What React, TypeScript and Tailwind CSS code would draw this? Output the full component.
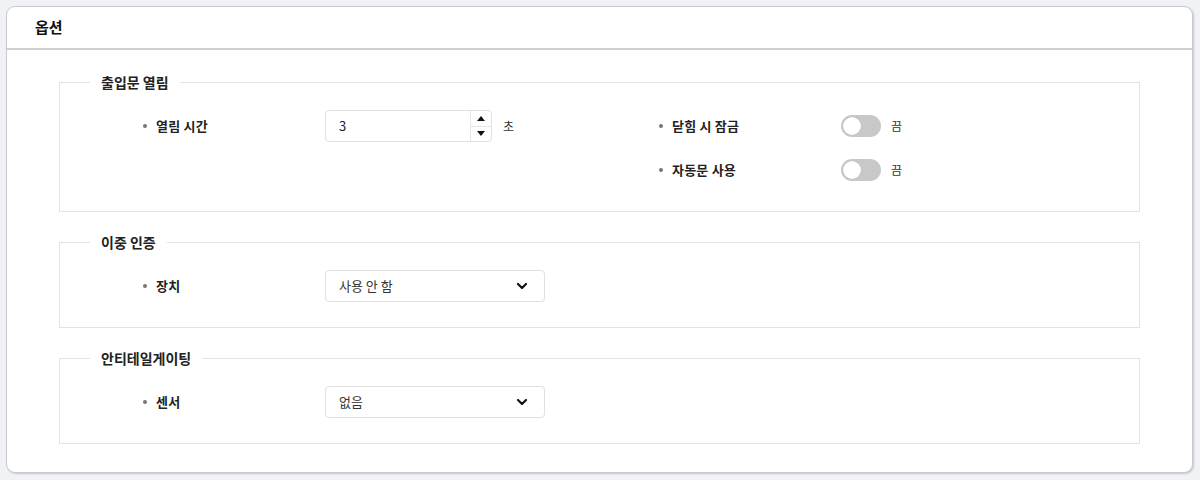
import { ChevronDown } from "lucide-react";

const font = { fontFamily: '"Noto Sans CJK KR", "Noto Sans", sans-serif' };

function Label({ text }: { text: string }) {
  return (
    <div className="flex items-center w-[182px] shrink-0">
      <span className="w-[4px] h-[4px] rounded-full bg-[#777] mr-[9px]" />
      <span className="text-[13px] font-bold text-[#222] tracking-[0.2px]">{text}</span>
    </div>
  );
}

function Toggle() {
  return (
    <div className="flex items-center gap-[10px]">
      <div className="w-[40px] h-[22px] rounded-full bg-[#c8c8c8] p-[2px] flex items-center">
        <div className="w-[18px] h-[18px] rounded-full bg-white shadow-[0_0_1px_rgba(0,0,0,0.2)]" />
      </div>
      <span className="text-[12px] text-[#333]">끔</span>
    </div>
  );
}

function Select({ value }: { value: string }) {
  return (
    <div className="w-[220px] h-[32px] border border-[#e0e0e0] rounded-[4px] bg-white flex items-center justify-between pl-[13px] pr-[14px]">
      <span className="text-[13px] text-[#333]">{value}</span>
      <ChevronDown size={16} strokeWidth={3.2} className="text-[#111]" />
    </div>
  );
}

function Group({ title, children }: { title: string; children: React.ReactNode }) {
  return (
    <fieldset className="border border-[#e2e2e2] px-0 pt-[18px] pb-[25px] m-0 min-w-0">
      <legend className="ml-[30px] px-[11px] text-[14px] font-bold text-[#222] leading-[20px]">{title}</legend>
      <div className="pl-[83px] pr-4">{children}</div>
    </fieldset>
  );
}

export default function App() {
  return (
    <div className="min-h-[480px] bg-[#f1f2f6] p-[6px] pr-[7px]" style={font}>
      <div className="bg-white border border-[#cbcbcb] rounded-[9px] shadow-[1px_1px_2px_rgba(0,0,0,0.18)] h-[467px] flex flex-col">
        <div className="h-[43px] border-b-2 border-[#d0d0d0] flex items-center pl-[28px] shrink-0">
          <h1 className="text-[15px] font-bold text-[#111]">옵션</h1>
        </div>
        <div className="px-[52px] pt-[22px] flex flex-col gap-[20px]">
          <Group title="출입문 열림">
            <div className="flex">
              <div className="w-[516px] flex items-start">
                <div className="flex items-center h-8">
                  <Label text="열림 시간" />
                  <div className="w-[167px] h-[32px] border border-[#e0e0e0] rounded-[4px] flex">
                    <div className="flex-1 flex items-center pl-[13px] text-[13px] text-[#222]">3</div>
                    <div className="w-[21px] border-l border-[#e6e6e6] flex flex-col">
                      <div className="flex-1 flex items-center justify-center border-b border-[#e6e6e6]">
                        <svg width="8" height="5" viewBox="0 0 8 5"><path d="M4 0L8 5H0z" fill="#111" /></svg>
                      </div>
                      <div className="flex-1 flex items-center justify-center">
                        <svg width="8" height="5" viewBox="0 0 8 5"><path d="M0 0H8L4 5z" fill="#111" /></svg>
                      </div>
                    </div>
                  </div>
                  <span className="ml-[11px] text-[12px] text-[#333]">초</span>
                </div>
              </div>
              <div className="flex flex-col gap-[12px]">
                <div className="flex items-center h-8">
                  <Label text="닫힘 시 잠금" />
                  <Toggle />
                </div>
                <div className="flex items-center h-8">
                  <Label text="자동문 사용" />
                  <Toggle />
                </div>
              </div>
            </div>
          </Group>
          <Group title="이중 인증">
            <div className="flex items-center h-8">
              <Label text="장치" />
              <Select value="사용 안 함" />
            </div>
          </Group>
          <Group title="안티테일게이팅">
            <div className="flex items-center h-8">
              <Label text="센서" />
              <Select value="없음" />
            </div>
          </Group>
        </div>
      </div>
    </div>
  );
}
